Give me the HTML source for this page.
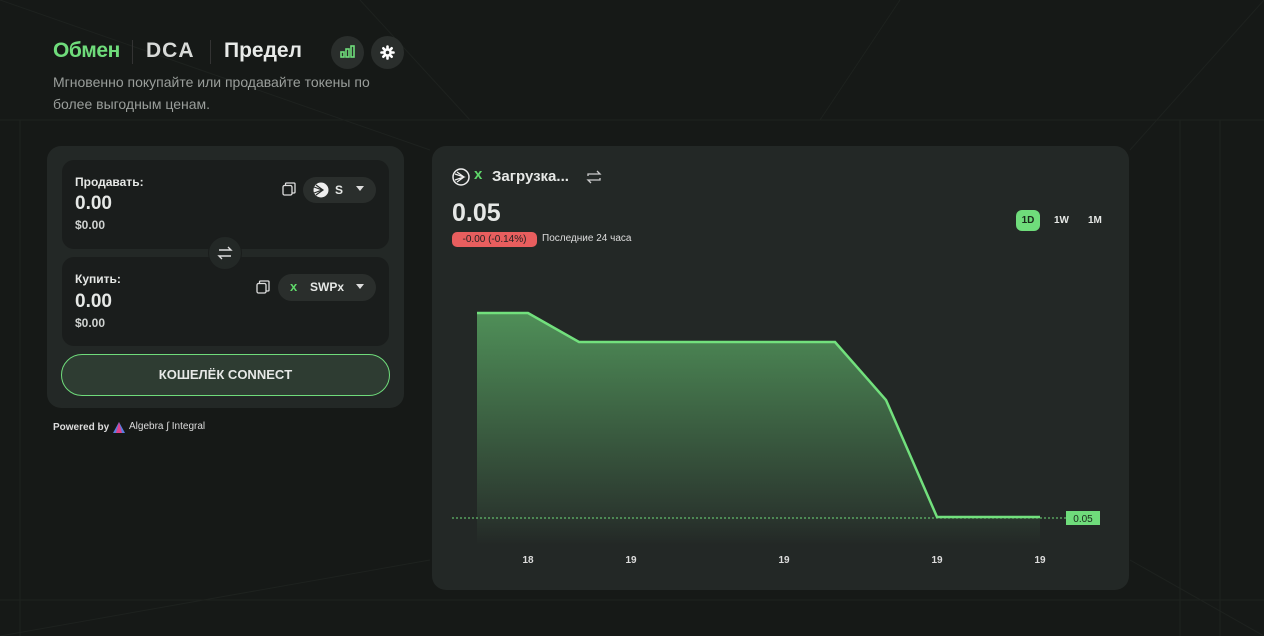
<!DOCTYPE html>
<html><head><meta charset="utf-8"><style>
*{margin:0;padding:0;box-sizing:border-box}
body{width:1264px;height:636px;overflow:hidden;background:#161917;font-family:"Liberation Sans",sans-serif;color:#e6e8e6;position:relative}
.abs{position:absolute}
.card{background:#232826;border-radius:14px}
.inner{background:#1a1d1c;border-radius:12px}
.pill{background:#2a2e2c;border-radius:14px}
</style></head><body>
<svg class="abs" style="left:0;top:0" width="1264" height="636">
<g stroke="#1e221f" stroke-width="1" fill="none">
<line x1="0" y1="120" x2="1264" y2="120"/><line x1="0" y1="600" x2="1264" y2="600"/>
<line x1="0" y1="0" x2="430" y2="150"/><line x1="1264" y1="0" x2="1130" y2="150"/>
<line x1="0" y1="636" x2="430" y2="560"/><line x1="1264" y1="636" x2="1130" y2="560"/>
<line x1="360" y1="0" x2="470" y2="120"/><line x1="900" y1="0" x2="820" y2="120"/>
<line x1="1180" y1="120" x2="1180" y2="636"/><line x1="1220" y1="120" x2="1220" y2="636"/>
<line x1="20" y1="120" x2="20" y2="636"/>
</g></svg>
<div class="abs" style="left:53px;top:39px;font-size:21px;font-weight:bold;color:#6fdc7b;letter-spacing:-0.4px">Обмен</div>
<div class="abs" style="left:132px;top:40px;width:1px;height:24px;background:#333"></div>
<div class="abs" style="left:146px;top:39px;font-size:21px;font-weight:bold;color:#d8dad8;letter-spacing:1px">DCA</div>
<div class="abs" style="left:210px;top:40px;width:1px;height:24px;background:#333"></div>
<div class="abs" style="left:224px;top:39px;font-size:21px;font-weight:bold;color:#e8eae8">Предел</div>
<div class="abs" style="left:331px;top:36px;width:33px;height:33px;border-radius:50%;background:#2a2e2c"></div>
<svg class="abs" style="left:340px;top:45px" width="15" height="14"><g fill="none" stroke="#6fdc7b" stroke-width="1.6"><rect x="1" y="7" width="3" height="5"/><rect x="6" y="4" width="3" height="8"/><rect x="11" y="1" width="3" height="11"/></g></svg>
<div class="abs" style="left:371px;top:36px;width:33px;height:33px;border-radius:50%;background:#2a2e2c"></div>
<svg class="abs" style="left:380px;top:45px" width="15" height="15"><g stroke="#fff" stroke-width="2.6" stroke-linecap="round"><line x1="7.5" y1="1.5" x2="7.5" y2="13.5"/><line x1="1.5" y1="7.5" x2="13.5" y2="7.5"/><line x1="3.3" y1="3.3" x2="11.7" y2="11.7"/><line x1="11.7" y1="3.3" x2="3.3" y2="11.7"/></g><circle cx="7.5" cy="7.5" r="4.3" fill="#fff"/><circle cx="7.5" cy="7.5" r="1.8" fill="#2a2e2c"/></svg>
<div class="abs" style="left:53px;top:71px;font-size:14px;line-height:22px;color:#9a9e9b;width:340px">Мгновенно покупайте или продавайте токены по более выгодным ценам.</div>

<div class="abs card" style="left:47px;top:146px;width:357px;height:262px"></div>
<div class="abs inner" style="left:62px;top:160px;width:327px;height:89px"></div>
<div class="abs inner" style="left:62px;top:257px;width:327px;height:89px"></div>
<div class="abs" style="left:75px;top:175px;font-size:12px;font-weight:bold">Продавать:</div>
<div class="abs" style="left:75px;top:193px;font-size:19px;font-weight:bold">0.00</div>
<div class="abs" style="left:75px;top:218px;font-size:12px;font-weight:bold;color:#cfd2d0">$0.00</div>
<div class="abs" style="left:75px;top:272px;font-size:12px;font-weight:bold">Купить:</div>
<div class="abs" style="left:75px;top:291px;font-size:19px;font-weight:bold">0.00</div>
<div class="abs" style="left:75px;top:316px;font-size:12px;font-weight:bold;color:#cfd2d0">$0.00</div>
<svg class="abs" style="left:282px;top:182px" width="14" height="14"><rect x="1" y="3.5" width="9" height="9.5" rx="1.5" fill="none" stroke="#ddd" stroke-width="1.3"/><path d="M3.5 3.5V2a1 1 0 0 1 1-1h7.5a1 1 0 0 1 1 1v8a1 1 0 0 1-1 1H10" fill="none" stroke="#ddd" stroke-width="1.3"/></svg>
<div class="abs pill" style="left:303px;top:177px;width:73px;height:26px"></div>
<svg class="abs" style="left:313px;top:182px" width="16" height="16"><circle cx="8" cy="8" r="7.5" fill="#eee"/><path d="M1 5l8 3-8 3M3 3l7 5-7 5" stroke="#2a2e2c" stroke-width="1.2" fill="none"/></svg>
<div class="abs" style="left:335px;top:183px;font-size:12px;font-weight:bold">S</div>
<div class="abs" style="left:356px;top:186px;width:0;height:0;border-left:4.5px solid transparent;border-right:4.5px solid transparent;border-top:5px solid #ddd"></div>
<svg class="abs" style="left:256px;top:280px" width="14" height="14"><rect x="1" y="3.5" width="9" height="9.5" rx="1.5" fill="none" stroke="#ddd" stroke-width="1.3"/><path d="M3.5 3.5V2a1 1 0 0 1 1-1h7.5a1 1 0 0 1 1 1v8a1 1 0 0 1-1 1H10" fill="none" stroke="#ddd" stroke-width="1.3"/></svg>
<div class="abs pill" style="left:278px;top:274px;width:98px;height:27px"></div>
<div class="abs" style="left:290px;top:279px;font-size:13px;font-weight:bold;color:#5fd86a">x</div>
<div class="abs" style="left:310px;top:280px;font-size:12px;font-weight:bold">SWPx</div>
<div class="abs" style="left:356px;top:284px;width:0;height:0;border-left:4.5px solid transparent;border-right:4.5px solid transparent;border-top:5px solid #ddd"></div>
<div class="abs" style="left:208px;top:236px;width:34px;height:34px;border-radius:50%;background:#232826;border:1px solid #1a1d1c"></div>
<svg class="abs" style="left:217px;top:245px" width="16" height="16"><path d="M2 5h12l-3-3M14 11H2l3 3" fill="none" stroke="#ddd" stroke-width="1.4"/></svg>
<div class="abs" style="left:61px;top:354px;width:329px;height:42px;border-radius:21px;background:#2e3c32;border:1px solid #6fdc7b;text-align:center;line-height:40px;font-size:13px;font-weight:bold">КОШЕЛЁК CONNECT</div>
<div class="abs" style="left:53px;top:422px;font-size:10px;font-weight:bold;color:#ddd">Powered by</div>
<svg class="abs" style="left:113px;top:422px" width="12" height="11"><path d="M6 0L12 11H0z" fill="#5a7de0"/><path d="M6 0L9 11H3z" fill="#e0408a"/></svg>
<div class="abs" style="left:129px;top:421px;font-size:10px;color:#ddd">Algebra ∫ Integral</div>

<div class="abs card" style="left:432px;top:146px;width:697px;height:444px"></div>
<svg class="abs" style="left:452px;top:168px" width="18" height="18"><circle cx="9" cy="9" r="8" fill="none" stroke="#eee" stroke-width="1.5"/><path d="M3 6l9 3-9 3M5 4l7 5-7 5" stroke="#eee" stroke-width="1.2" fill="none"/></svg>
<div class="abs" style="left:474px;top:166px;font-size:15px;font-weight:bold;color:#5fd86a">x</div>
<div class="abs" style="left:492px;top:168px;font-size:15px;font-weight:bold">Загрузка...</div>
<svg class="abs" style="left:586px;top:170px" width="16" height="14"><path d="M2 6V4h12l-3-3M14 8v2H2l3 3" fill="none" stroke="#ccc" stroke-width="1.3"/></svg>
<div class="abs" style="left:452px;top:199px;font-size:25px;font-weight:bold">0.05</div>
<div class="abs" style="left:452px;top:232px;width:85px;height:15px;border-radius:5px;background:#e85e5e;font-size:10px;color:#222;text-align:center;line-height:15px">-0.00 (-0.14%)</div>
<div class="abs" style="left:542px;top:233px;font-size:10px;color:#ddd">Последние 24 часа</div>
<div class="abs" style="left:1016px;top:210px;width:24px;height:21px;border-radius:6px;background:#6fdc7b;color:#1a2a1c;font-size:10px;font-weight:bold;text-align:center;line-height:21px">1D</div>
<div class="abs" style="left:1054px;top:215px;font-size:10px;font-weight:bold">1W</div>
<div class="abs" style="left:1088px;top:215px;font-size:10px;font-weight:bold">1M</div>
<svg class="abs" style="left:432px;top:290px" width="697" height="290">
<defs><linearGradient id="g" x1="0" y1="0" x2="0" y2="1"><stop offset="0" stop-color="#4f8f58"/><stop offset="0.85" stop-color="#2c3a30"/><stop offset="1" stop-color="#232826"/></linearGradient></defs>
<path d="M45 23L96 23L147 52L403 52L454 110L505 227L608 227L608 255L45 255Z" fill="url(#g)"/>
<line x1="20" y1="228" x2="634" y2="228" stroke="#6fdc7b" stroke-width="1" stroke-dasharray="2 2"/>
<path d="M45 23L96 23L147 52L403 52L454 110L505 227L608 227" fill="none" stroke="#72e07d" stroke-width="2.5"/>
<rect x="634" y="221" width="34" height="14" fill="#6fdc7b"/>
<text x="651" y="232" font-size="10" fill="#1a2a1c" text-anchor="middle" font-family="Liberation Sans">0.05</text>
<g font-size="10" font-weight="bold" fill="#ddd" text-anchor="middle" font-family="Liberation Sans">
<text x="96" y="273">18</text><text x="199" y="273">19</text><text x="352" y="273">19</text><text x="505" y="273">19</text><text x="608" y="273">19</text></g>
</svg>
</body></html>
